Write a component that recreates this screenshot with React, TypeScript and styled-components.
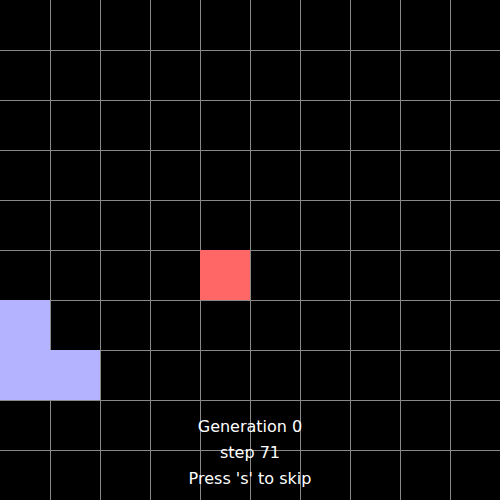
import React from 'react';
import styled, { createGlobalStyle } from 'styled-components';

const GlobalStyle = createGlobalStyle`
  html, body {
    margin: 0;
    padding: 0;
    background: #000;
  }
`;

const Board = styled.div`
  position: relative;
  width: 500px;
  height: 500px;
  background: #000;
  overflow: hidden;
`;

const Grid = styled.div`
  display: grid;
  grid-template-columns: repeat(10, 50px);
  grid-template-rows: repeat(10, 50px);
`;

const Cell = styled.div<{ $fill?: string; $col: number; $row: number }>`
  box-sizing: border-box;
  background: ${(p) => p.$fill || '#000'};
  border-left: ${(p) => (p.$col > 0 ? `1px solid ${p.$fill || '#888'}` : 'none')};
  border-top: ${(p) => (p.$row > 0 ? `1px solid ${p.$fill || '#888'}` : 'none')};
`;

const Status = styled.div`
  position: absolute;
  left: 0;
  right: 0;
  bottom: 8px;
  display: flex;
  flex-direction: column;
  align-items: center;
  color: #fff;
  font-family: 'DejaVu Sans', sans-serif;
  font-size: 16px;
  line-height: 26px;
`;

const alive: Record<string, string> = {
  '4,5': '#ff6666',
  '0,6': '#b3b3ff',
  '0,7': '#b3b3ff',
  '1,7': '#b3b3ff',
};

const App = () => {
  const cells = [];
  for (let row = 0; row < 10; row++) {
    for (let col = 0; col < 10; col++) {
      cells.push(
        <Cell key={`${col},${row}`} $col={col} $row={row} $fill={alive[`${col},${row}`]} />
      );
    }
  }

  return (
    <>
      <GlobalStyle />
      <Board>
        <Grid>{cells}</Grid>
        <Status>
          <span>Generation 0</span>
          <span>step 71</span>
          <span>Press 's' to skip</span>
        </Status>
      </Board>
    </>
  );
};

export default App;
